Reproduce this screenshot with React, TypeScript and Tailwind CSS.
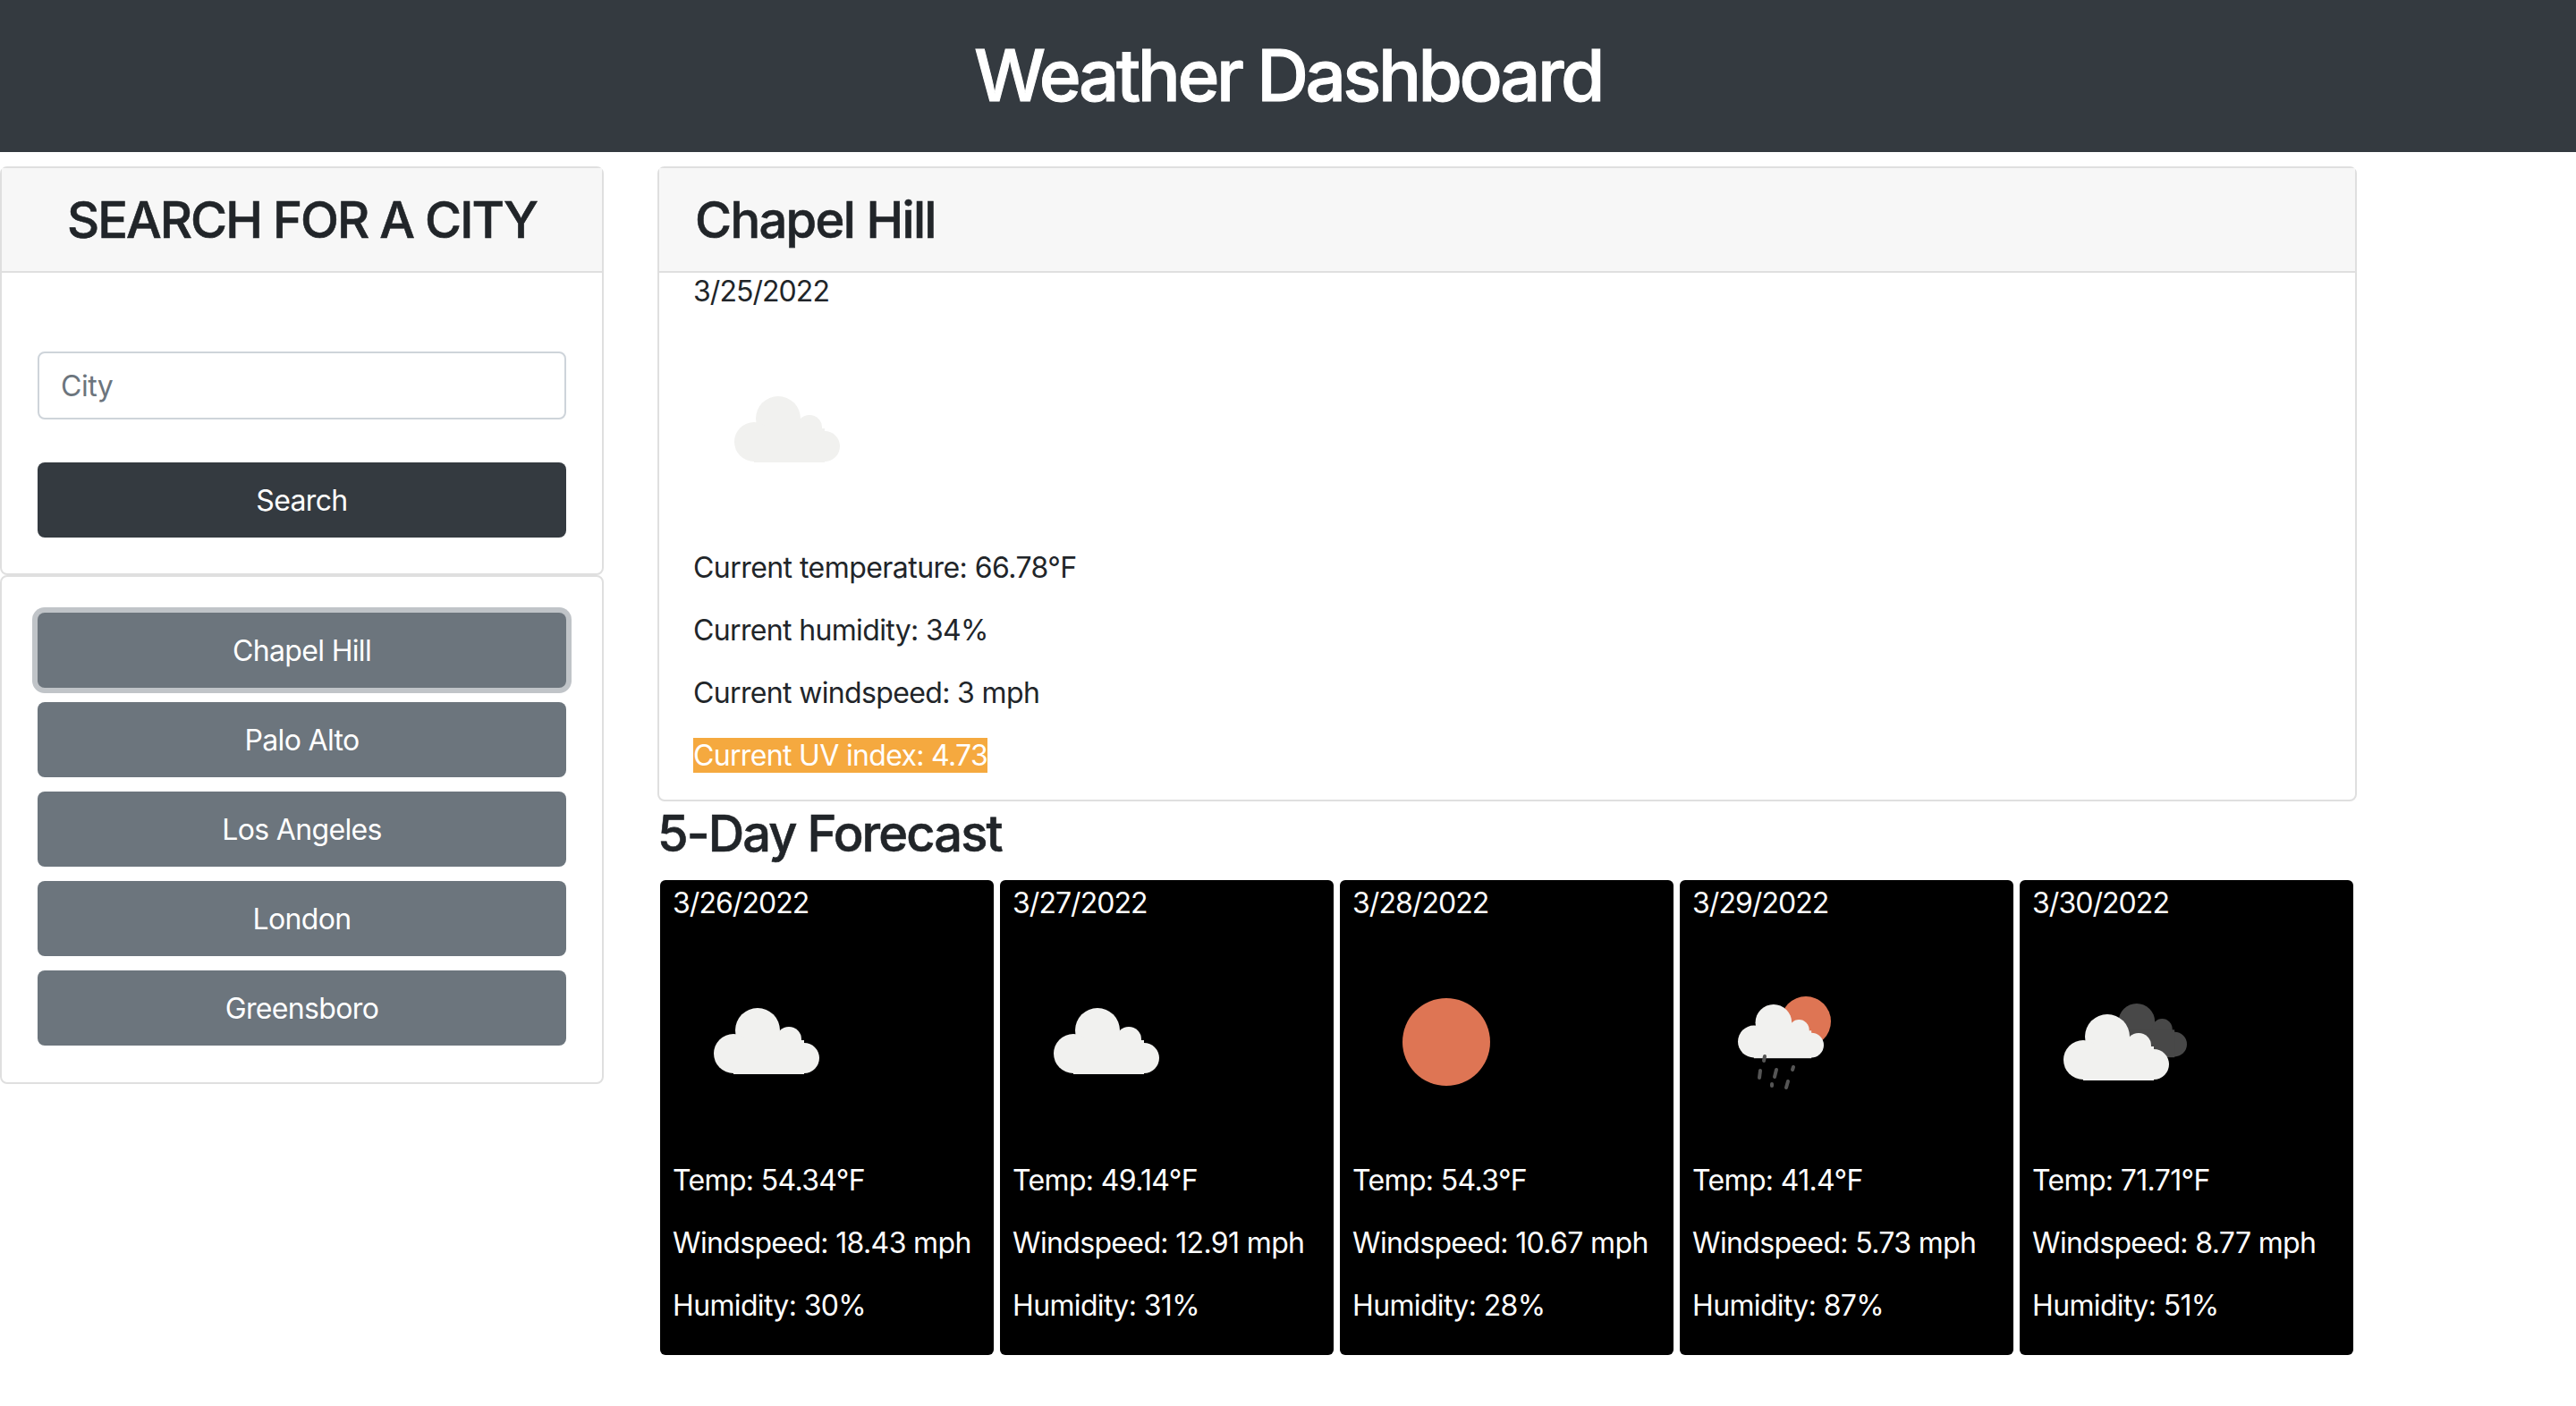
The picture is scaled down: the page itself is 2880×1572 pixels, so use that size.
const CloudShape = ({ x, y, w, fill }: { x: number; y: number; w: number; fill: string }) => (
  <g transform={`translate(${x} ${y}) scale(${w / 118})`} fill={fill}>
    <circle cx="49" cy="25" r="25" />
    <circle cx="84" cy="35" r="14" />
    <circle cx="22" cy="51" r="22" />
    <circle cx="101" cy="56" r="17" />
    <rect x="22" y="36" width="79" height="38" />
  </g>
);

const WHITE = "#f1f1ef";

function Icon({ kind }: { kind: string }) {
  return (
    <svg viewBox="0 0 200 200" className="block h-[200px] w-[200px]">
      {kind === "cloud" && <CloudShape x={45} y={62} w={118} fill={WHITE} />}
      {kind === "sun" && <circle cx="104" cy="100" r="49" fill="#de7554" />}
      {kind === "rain" && (
        <>
          <circle cx="126" cy="77" r="28" fill="#de7554" />
          <CloudShape x={50} y={58} w={96} fill={WHITE} />
          <g stroke="#555" strokeWidth="4" strokeLinecap="round">
            <path d="M80 116l-1 5" />
            <path d="M75 132l-1 8" />
            <path d="M93 131l-2 8" />
            <path d="M112 128l-1 3" />
            <path d="M88 147l0 2" />
            <path d="M106 144l-2 7" />
          </g>
        </>
      )}
      {kind === "clouds" && (
        <>
          <CloudShape x={76} y={57} w={96} fill="#484848" />
          <CloudShape x={34} y={69} w={118} fill={WHITE} />
        </>
      )}
    </svg>
  );
}

const forecast = [
  { date: "3/26/2022", kind: "cloud", temp: "54.34", wind: "18.43", hum: "30" },
  { date: "3/27/2022", kind: "cloud", temp: "49.14", wind: "12.91", hum: "31" },
  { date: "3/28/2022", kind: "sun", temp: "54.3", wind: "10.67", hum: "28" },
  { date: "3/29/2022", kind: "rain", temp: "41.4", wind: "5.73", hum: "87" },
  { date: "3/30/2022", kind: "clouds", temp: "71.71", wind: "8.77", hum: "51" },
];

const cities = ["Chapel Hill", "Palo Alto", "Los Angeles", "London", "Greensboro"];

export default function App() {
  return (
    <div className="min-h-[1572px] bg-white text-[32px] leading-[48px] tracking-[-0.65px] text-[#212529] [font-family:Inter,sans-serif]">
      <header className="flex h-[170px] items-center justify-center bg-[#343a40]">
        <h1 className="-translate-y-[1px] text-[80px] leading-[96px] font-medium tracking-[-3.5px] text-white [-webkit-text-stroke:1px_white]">
          Weather Dashboard
        </h1>
      </header>

      <div className="flex items-start gap-[60px] pt-[16px]">
        <aside className="flex w-[675px] flex-col">
          <section className="h-[457px] rounded-lg border-2 border-[#dfdfdf]">
            <div className="flex h-[117px] items-center justify-center border-b-2 border-[#dfdfdf] bg-[#f7f7f7]">
              <h2 className="text-[56px] leading-[66px] font-medium tracking-[-1.95px] [-webkit-text-stroke:0.6px_#212529]">
                SEARCH FOR A CITY
              </h2>
            </div>
            <div className="flex flex-col gap-[48px] px-[40px] pt-[88px]">
              <input
                placeholder="City"
                className="h-[76px] w-full rounded-lg border-2 border-[#ced4da] bg-white px-[24px] text-[32px] tracking-[-0.5px] outline-none placeholder:text-[#6c757d]"
              />
              <button className="h-[84px] w-full rounded-lg bg-[#343a40] pt-[2px] text-[32px] tracking-[-0.65px] text-white">
                Search
              </button>
            </div>
          </section>

          <section className="flex h-[569px] flex-col gap-[16px] rounded-lg border-2 border-[#dfdfdf] px-[40px] pt-[40px]">
            {cities.map((c, i) => (
              <button
                key={c}
                className={
                  "h-[84px] w-full rounded-lg bg-[#6c757d] pt-[2px] text-[32px] tracking-[-0.65px] text-white" +
                  (i === 0 ? " ring-[6px] ring-[#c0c4c8]" : "")
                }
              >
                {c}
              </button>
            ))}
          </section>
        </aside>

        <main className="w-[1900px]">
          <section className="h-[710px] rounded-lg border-2 border-[#dfdfdf]">
            <div className="flex h-[117px] items-center border-b-2 border-[#dfdfdf] bg-[#f7f7f7] px-[40px]">
              <h2 className="text-[56px] leading-[66px] font-medium tracking-[-1.67px] [-webkit-text-stroke:0.6px_#212529]">
                Chapel Hill
              </h2>
            </div>
            <div className="px-[38px]">
              <div className="-mt-[3px] tracking-[-0.95px]">3/25/2022</div>
              <div className="mt-[31px] ml-[1px]">
                <Icon kind="cloud" />
              </div>
              <div className="mt-[30px] flex flex-col items-start gap-[22px]">
                <p className="tracking-[-0.55px]">Current temperature: 66.78°F</p>
                <p>Current humidity: 34%</p>
                <p>Current windspeed: 3 mph</p>
                <p>
                  <span className="bg-[#f5a93f] tracking-[-0.67px] text-white">Current UV index: 4.73</span>
                </p>
              </div>
            </div>
          </section>

          <h3 className="mt-[3px] text-[56px] leading-[66px] font-medium tracking-[-1.9px] [-webkit-text-stroke:0.6px_#212529]">
            5-Day Forecast
          </h3>

          <div className="mt-[19px] ml-[3px] flex gap-[7px]">
            {forecast.map((d) => (
              <article key={d.date} className="h-[531px] w-[373px] rounded-md bg-black px-[14px] pt-[2px] text-white">
                <div className="tracking-[-0.95px]">{d.date}</div>
                <div className="mt-[31px] ml-[1px]">
                  <Icon kind={d.kind} />
                </div>
                <div className="mt-[31px] flex flex-col gap-[22px] whitespace-nowrap">
                  <p>Temp: {d.temp}°F</p>
                  <p>Windspeed: {d.wind} mph</p>
                  <p>Humidity: {d.hum}%</p>
                </div>
              </article>
            ))}
          </div>
        </main>
      </div>
    </div>
  );
}
